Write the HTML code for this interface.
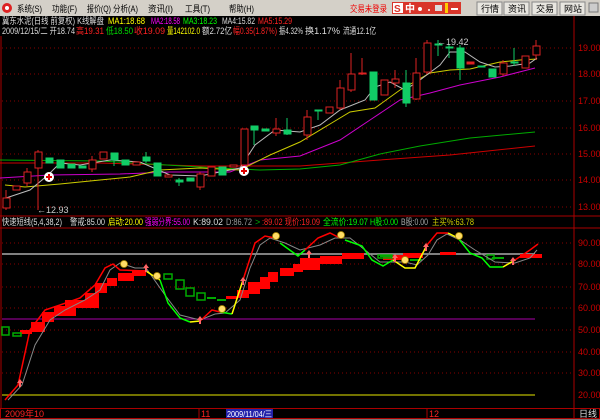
<!DOCTYPE html>
<html><head><meta charset="utf-8"><style>
html,body{margin:0;padding:0;background:#000;width:600px;height:420px;overflow:hidden;font-family:"Liberation Sans","Noto Sans CJK SC",sans-serif;}
svg{display:block}
</style></head><body>
<svg width="600" height="420" xmlns="http://www.w3.org/2000/svg" font-family="Liberation Sans, Noto Sans CJK SC, sans-serif">
<rect width="600" height="420" fill="#000"/>
<rect x="0" y="0" width="600" height="16" fill="#d4d0c8"/>
<circle cx="7" cy="8" r="5" fill="#d22"/><circle cx="7" cy="8" r="2" fill="#fff"/>
<g font-size="9" fill="#000" lengthAdjust="spacingAndGlyphs">
<text x="17" y="12" textLength="25" lengthAdjust="spacingAndGlyphs">系统(S)</text><text x="52" y="12" textLength="25" lengthAdjust="spacingAndGlyphs">功能(F)</text><text x="87" y="12" textLength="24" lengthAdjust="spacingAndGlyphs">报价(Q)</text><text x="113" y="12" textLength="25" lengthAdjust="spacingAndGlyphs">分析(A)</text><text x="148" y="12" textLength="25" lengthAdjust="spacingAndGlyphs">资讯(I)</text><text x="185" y="12" textLength="25" lengthAdjust="spacingAndGlyphs">工具(T)</text><text x="229" y="12" textLength="25" lengthAdjust="spacingAndGlyphs">帮助(H)</text>
</g>
<text x="350" y="12" font-size="9" fill="#e00" textLength="37" lengthAdjust="spacingAndGlyphs">交易未登录</text>
<rect x="392" y="2" width="69" height="12" fill="#d9352a"/>
<rect x="393" y="3" width="10" height="10" fill="#fff"/><text x="394" y="12" font-size="10" font-weight="bold" fill="#d9352a">S</text>
<text x="405" y="12" font-size="10" fill="#fff" font-weight="bold">中</text>
<circle cx="420" cy="9" r="2" fill="#fff"/><circle cx="429" cy="10" r="1" fill="#fff"/>
<rect x="435" y="5" width="7" height="6" fill="#ddd"/><rect x="445" y="3" width="3" height="10" fill="#fc0"/><rect x="451" y="8" width="7" height="2" fill="#fff"/>
<g font-size="9" fill="#000">
<rect x="477" y="2" width="25" height="13" fill="#e8e6e0" stroke="#888"/><text x="481" y="12">行情</text>
<rect x="504" y="2" width="25" height="13" fill="#e8e6e0" stroke="#888"/><text x="508" y="12">资讯</text>
<rect x="532" y="2" width="25" height="13" fill="#e8e6e0" stroke="#888"/><text x="536" y="12">交易</text>
<rect x="560" y="2" width="25" height="13" fill="#e8e6e0" stroke="#888"/><text x="564" y="12">网站</text>
</g>
<rect x="589" y="3" width="9" height="9" fill="#ccc" stroke="#777"/>
<g font-size="9">
<text x="2" y="24" fill="#ddd" textLength="102" lengthAdjust="spacingAndGlyphs">冀东水泥(日线 前复权) K线解盘</text>
<text x="108" y="24" fill="#ff0" textLength="37" lengthAdjust="spacingAndGlyphs">MA1:18.68</text>
<text x="151" y="24" fill="#f0f" textLength="29" lengthAdjust="spacingAndGlyphs">MA2:18.58</text>
<text x="183" y="24" fill="#0f0" textLength="34" lengthAdjust="spacingAndGlyphs">MA3:18.23</text>
<text x="222" y="24" fill="#ddd" textLength="33" lengthAdjust="spacingAndGlyphs">MA4:15.82</text>
<text x="258" y="24" fill="#f22" textLength="34" lengthAdjust="spacingAndGlyphs">MA5:15.29</text>
<text x="2" y="34" fill="#ddd" textLength="73" lengthAdjust="spacingAndGlyphs">2009/12/15/二 开18.74</text>
<text x="76" y="34" fill="#f22" textLength="28" lengthAdjust="spacingAndGlyphs">高19.31</text>
<text x="106" y="34" fill="#0d0" textLength="27" lengthAdjust="spacingAndGlyphs">低18.50</text>
<text x="134" y="34" fill="#f22" textLength="31" lengthAdjust="spacingAndGlyphs">收19.09</text>
<text x="167" y="34" fill="#ff0" textLength="33" lengthAdjust="spacingAndGlyphs">量142102.0</text>
<text x="202" y="34" fill="#ddd" textLength="30" lengthAdjust="spacingAndGlyphs">额2.72亿</text>
<text x="233" y="34" fill="#f22" textLength="44" lengthAdjust="spacingAndGlyphs">幅0.35(1.87%)</text>
<text x="279" y="34" fill="#ddd" textLength="24" lengthAdjust="spacingAndGlyphs">振4.32%</text>
<text x="305" y="34" fill="#ddd" textLength="35" lengthAdjust="spacingAndGlyphs">换1.17%</text>
<text x="343" y="34" fill="#ddd" textLength="33" lengthAdjust="spacingAndGlyphs">流通12.1亿</text>
</g>
<line x1="574" y1="16" x2="574" y2="408" stroke="#a00"/>
<line x1="1" y1="36" x2="1" y2="408" stroke="#a00"/>
<line x1="0" y1="216" x2="600" y2="216" stroke="#a00"/>
<line x1="0" y1="228" x2="600" y2="228" stroke="#a00"/>
<g stroke="#800" stroke-dasharray="1,3">
<line x1="2" y1="48" x2="574" y2="48"/><line x1="2" y1="74" x2="574" y2="74"/><line x1="2" y1="101" x2="574" y2="101"/><line x1="2" y1="128" x2="574" y2="128"/><line x1="2" y1="154" x2="574" y2="154"/><line x1="2" y1="180" x2="574" y2="180"/><line x1="2" y1="207" x2="574" y2="207"/>
<line x1="2" y1="243" x2="574" y2="243"/><line x1="2" y1="264" x2="574" y2="264"/><line x1="2" y1="287" x2="574" y2="287"/><line x1="2" y1="308" x2="574" y2="308"/><line x1="2" y1="330" x2="574" y2="330"/><line x1="2" y1="352" x2="574" y2="352"/><line x1="2" y1="373" x2="574" y2="373"/>
</g>
<g font-size="9" fill="#c00">
<text x="578" y="51">19.00</text><text x="578" y="77">18.00</text><text x="578" y="104">17.00</text><text x="578" y="131">16.00</text><text x="578" y="157">15.00</text><text x="578" y="183">14.00</text><text x="578" y="210">13.00</text>
<text x="578" y="246">90.00</text><text x="578" y="267">80.00</text><text x="578" y="290">70.00</text><text x="578" y="311">60.00</text><text x="578" y="333">50.00</text><text x="578" y="355">40.00</text><text x="578" y="376">30.00</text><text x="578" y="398">20.00</text>
</g>
<g fill="none" stroke-width="1">
<polyline stroke="#c00" points="0,163 100,163 200,166 300,166 380,160 450,155 535,146"/>
<polyline stroke="#0a0" points="0,160 100,161 200,167 260,170 300,169 340,165 380,154 420,146 470,138 535,132"/>
<polyline stroke="#c0c" points="0,178 50,175 120,174 170,172 230,172 260,160 300,156 340,140 370,120 400,100 430,93 460,85 500,77 535,68"/>
<polyline stroke="#cc0" points="5,185 25,187 60,184 100,180 130,177 160,170 200,168 240,170 270,155 300,142 330,124 350,112 375,108 400,90 430,73 450,70 470,69 500,62 520,60 537,59"/>
<polyline stroke="#bbb" points="6,198 30,190 48,175 60,163 80,165 110,160 140,162 170,175 200,176 220,172 240,168 255,145 275,130 300,132 320,125 340,110 365,100 375,87 390,82 405,90 420,80 440,65 450,52 465,52 480,62 495,67 510,66 530,63 537,58"/>
</g>
<g stroke="#d22" fill="none">
<line x1="6" y1="190" x2="6" y2="210"/><rect x="3" y="198" width="7" height="10" fill="#000"/>
<rect x="13" y="186" width="7" height="4" fill="#000"/>
<line x1="27" y1="168" x2="27" y2="186"/><rect x="24" y="172" width="7" height="11" fill="#000"/>
<line x1="38" y1="150" x2="38" y2="210"/><rect x="35" y="152" width="7" height="16" fill="#000"/>
<line x1="92" y1="156" x2="92" y2="172"/><rect x="89" y="160" width="7" height="9" fill="#000"/>
<rect x="100" y="152" width="7" height="7" fill="#000"/>
<rect x="133" y="162" width="7" height="3" fill="#000"/>
<rect x="165" y="175" width="7" height="2" fill="#000"/>
<line x1="200" y1="172" x2="200" y2="190"/><rect x="197" y="174" width="7" height="13" fill="#000"/>
<rect x="208" y="167" width="7" height="9" fill="#000"/>
<rect x="230" y="165" width="7" height="2" fill="#000"/>
<rect x="241" y="129" width="7" height="36" fill="#000"/>
<line x1="276" y1="118" x2="276" y2="136"/><rect x="273" y="129" width="7" height="4" fill="#000"/>
<line x1="307" y1="110" x2="307" y2="140"/><rect x="304" y="117" width="7" height="18" fill="#000"/>
<rect x="326" y="107" width="7" height="6" fill="#000"/>
<line x1="340" y1="80" x2="340" y2="110"/><rect x="337" y="88" width="7" height="20" fill="#000"/>
<line x1="351" y1="53" x2="351" y2="92"/><rect x="348" y="74" width="7" height="16" fill="#000"/>
<line x1="362" y1="58" x2="362" y2="75"/><rect x="359" y="73" width="7" height="1" fill="#000"/>
<rect x="381" y="80" width="7" height="15" fill="#000"/>
<line x1="395" y1="70" x2="395" y2="88"/><rect x="392" y="79" width="7" height="4" fill="#000"/>
<line x1="416" y1="58" x2="416" y2="100"/><rect x="413" y="73" width="7" height="26" fill="#000"/>
<line x1="427" y1="40" x2="427" y2="74"/><rect x="424" y="43" width="7" height="29" fill="#000"/>
<rect x="467" y="62" width="7" height="2" fill="#d22"/>
<line x1="503" y1="60" x2="503" y2="76"/><rect x="500" y="63" width="7" height="11" fill="#000"/>
<rect x="522" y="56" width="7" height="12" fill="#000"/>
<line x1="536" y1="40" x2="536" y2="60"/><rect x="533" y="46" width="7" height="9" fill="#000"/>
</g>
<g fill="#1c6" stroke="#1c6">
<rect x="46" y="158" width="7" height="5"/><rect x="57" y="160" width="7" height="8"/><rect x="68" y="164" width="7" height="4"/><rect x="79" y="166" width="7" height="2"/>
<rect x="111" y="153" width="7" height="7"/><line x1="114" y1="153" x2="114" y2="166"/><rect x="122" y="160" width="7" height="5"/><line x1="146" y1="152" x2="146" y2="163"/><rect x="143" y="157" width="7" height="4"/>
<rect x="154" y="163" width="7" height="13"/><rect x="176" y="180" width="7" height="2"/><line x1="179" y1="178" x2="179" y2="186"/><rect x="187" y="178" width="7" height="3"/>
<rect x="219" y="167" width="7" height="8"/><rect x="251" y="126" width="7" height="4"/><line x1="254" y1="126" x2="254" y2="145"/><rect x="262" y="129" width="7" height="2"/><line x1="287" y1="118" x2="287" y2="135"/><rect x="284" y="130" width="7" height="4"/>
<rect x="315" y="110" width="7" height="1"/><line x1="318" y1="110" x2="318" y2="120"/>
<rect x="370" y="72" width="7" height="28"/><rect x="403" y="83" width="7" height="20"/><line x1="406" y1="70" x2="406" y2="107"/>
<rect x="435" y="44" width="7" height="1"/><line x1="438" y1="40" x2="438" y2="56"/><rect x="446" y="47" width="7" height="1"/><line x1="449" y1="44" x2="449" y2="58"/>
<rect x="457" y="48" width="7" height="20"/><line x1="460" y1="45" x2="460" y2="80"/><rect x="478" y="66" width="7" height="1"/><rect x="489" y="69" width="7" height="8"/><rect x="511" y="62" width="7" height="1"/><line x1="514" y1="48" x2="514" y2="66"/>
</g>
<circle cx="49" cy="177" r="5" fill="#fff"/><path d="M49 174v6M46 177h6" stroke="#d00" stroke-width="2"/>
<circle cx="244" cy="171" r="5" fill="#fff"/><path d="M244 168v6M241 171h6" stroke="#d00" stroke-width="2"/>
<text x="37" y="213" font-size="9" fill="#ccc">←12.93</text>
<text x="437" y="45" font-size="9" fill="#ccc">←19.42</text>
<g font-size="9">
<text x="2" y="225" fill="#ddd" textLength="60" lengthAdjust="spacingAndGlyphs">快速短线(5,4,38,2)</text>
<text x="70" y="225" fill="#ddd" textLength="35" lengthAdjust="spacingAndGlyphs">警戒:85.00</text>
<text x="108" y="225" fill="#ff0" textLength="35" lengthAdjust="spacingAndGlyphs">启动:20.00</text>
<text x="145" y="225" fill="#f0f" textLength="45" lengthAdjust="spacingAndGlyphs">强弱分界:55.00</text>
<text x="193" y="225" fill="#ddd" textLength="30" lengthAdjust="spacingAndGlyphs">K:89.02</text>
<text x="226" y="225" fill="#999" textLength="26" lengthAdjust="spacingAndGlyphs">D:86.72</text>
<text x="255" y="225" fill="#0a0">&gt;</text>
<text x="262" y="225" fill="#f22" textLength="58" lengthAdjust="spacingAndGlyphs">:89.02 现价:19.09</text>
<text x="323" y="225" fill="#0f0" textLength="45" lengthAdjust="spacingAndGlyphs">全流价:19.07</text>
<text x="370" y="225" fill="#0f0" textLength="28" lengthAdjust="spacingAndGlyphs">H股:0.00</text>
<text x="401" y="225" fill="#aaa" textLength="27" lengthAdjust="spacingAndGlyphs">B股:0.00</text>
<text x="432" y="225" fill="#cc0" textLength="42" lengthAdjust="spacingAndGlyphs">主买%:63.78</text>
</g>
<line x1="2" y1="254" x2="535" y2="254" stroke="#aaa" stroke-width="1.5"/>
<line x1="2" y1="319" x2="535" y2="319" stroke="#a0a"/>
<line x1="2" y1="395" x2="535" y2="395" stroke="#990" stroke-width="1.5"/>
<g fill="#f00">
<rect x="20" y="330" width="12" height="4"/><rect x="31" y="322" width="14" height="10"/><rect x="42" y="312" width="12" height="10"/><rect x="54" y="306" width="22" height="10"/><rect x="65" y="300" width="34" height="8"/><rect x="85" y="293" width="14" height="7"/><rect x="95" y="283" width="12" height="10"/><rect x="107" y="278" width="10" height="8"/><rect x="118" y="273" width="16" height="8"/><rect x="132" y="270" width="14" height="6"/>
<rect x="226" y="296" width="12" height="3"/><rect x="237" y="290" width="12" height="8"/><rect x="248" y="282" width="12" height="12"/><rect x="260" y="277" width="10" height="12"/><rect x="268" y="272" width="10" height="10"/><rect x="280" y="268" width="14" height="8"/><rect x="293" y="264" width="10" height="8"/><rect x="300" y="258" width="20" height="12"/><rect x="320" y="256" width="22" height="8"/><rect x="342" y="253" width="22" height="6"/><rect x="383" y="255" width="20" height="5"/><rect x="403" y="253" width="20" height="5"/><rect x="440" y="252" width="16" height="3"/><rect x="520" y="254" width="22" height="4"/>
</g>
<g fill="none" stroke="#0a0" stroke-width="1.5">
<rect x="2" y="327" width="7" height="8"/><rect x="13" y="333" width="8" height="3"/>
<rect x="164" y="274" width="8" height="5"/><rect x="176" y="280" width="8" height="9"/><rect x="186" y="288" width="8" height="8"/><rect x="197" y="293" width="8" height="7"/>
<rect x="378" y="255" width="14" height="3"/><rect x="487" y="255" width="7" height="4"/>
</g>
<g fill="#0a0"><rect x="207" y="297" width="9" height="2"/><rect x="217" y="299" width="9" height="2"/><rect x="380" y="255" width="12" height="2"/><rect x="410" y="259" width="12" height="2"/><rect x="492" y="257" width="12" height="2"/></g>
<polyline fill="none" stroke="#888" points="8,400 22,385 35,345 50,320 65,310 85,300 100,290 110,270 120,263 135,268 146,268 165,295 180,315 200,320 215,314 225,313 240,300 250,268 260,245 270,238 285,243 300,250 320,245 335,238 350,238 365,250 380,262 392,262 405,262 417,265 428,255 437,240 447,234 460,240 475,250 495,262 515,263 530,258 537,250"/>
<polyline fill="none" stroke="#f00" stroke-width="1.5" points="5,400 18,385 30,330 45,310 60,305 80,298 95,285 105,268 113,264 120,270 146,271"/>
<polyline fill="none" stroke="#0f0" stroke-width="1.5" points="160,280 168,303 180,318 190,322"/>
<polyline fill="none" stroke="#ff0" stroke-width="1.5" points="146,271 152,275 160,280"/>
<polyline fill="none" stroke="#f00" stroke-width="1.5" points="200,321 212,310 220,312"/>
<polyline fill="none" stroke="#ff0" stroke-width="1.5" points="190,322 200,321"/>
<polyline fill="none" stroke="#0f0" stroke-width="1.5" points="220,312 232,314"/>
<polyline fill="none" stroke="#ff0" stroke-width="1.5" points="232,314 243,280"/>
<polyline fill="none" stroke="#f00" stroke-width="1.5" points="243,280 255,243 265,236 275,238"/>
<polyline fill="none" stroke="#0f0" stroke-width="1.5" points="280,243 298,256 305,250"/>
<polyline fill="none" stroke="#f00" stroke-width="1.5" points="305,250 318,238 330,233 340,238"/>
<polyline fill="none" stroke="#0f0" stroke-width="1.5" points="345,240 362,246 372,260 383,266 393,260"/>
<polyline fill="none" stroke="#ff0" stroke-width="1.5" points="393,260 405,268 415,268 427,245"/>
<polyline fill="none" stroke="#f00" stroke-width="1.5" points="427,245 437,233 448,233"/>
<polyline fill="none" stroke="#ff0" stroke-width="1.5" points="448,233 458,238"/>
<polyline fill="none" stroke="#0f0" stroke-width="1.5" points="458,238 470,253 482,258 490,267 503,267"/>
<polyline fill="none" stroke="#ff0" stroke-width="1.5" points="503,267 515,260"/>
<polyline fill="none" stroke="#f00" stroke-width="1.5" points="515,260 530,250 538,244"/>
<g fill="#fd6" stroke="#a80" stroke-width="0.8">
<circle cx="124" cy="264" r="3.5"/><circle cx="157" cy="276" r="3.5"/><circle cx="222" cy="309" r="3.5"/><circle cx="276" cy="236" r="3.5"/><circle cx="341" cy="235" r="3.5"/><circle cx="405" cy="260" r="3.5"/><circle cx="459" cy="236" r="3.5"/>
</g>
<g fill="#f66">
<path d="M17 383l3 -4l3 4h-2v4h-2v-4z"/><path d="M143 268l3 -4l3 4h-2v4h-2v-4z"/><path d="M197 320l3 -4l3 4h-2v4h-2v-4z"/><path d="M240 281l3 -4l3 4h-2v4h-2v-4z"/><path d="M306 254l3 -4l3 4h-2v4h-2v-4z"/><path d="M392 258l3 -4l3 4h-2v4h-2v-4z"/><path d="M423 247l3 -4l3 4h-2v4h-2v-4z"/><path d="M510 261l3 -4l3 4h-2v4h-2v-4z"/>
</g>
<rect x="0.5" y="408.5" width="599" height="10" fill="#000" stroke="#a00"/>
<line x1="199" y1="408" x2="199" y2="419" stroke="#a00"/><line x1="427" y1="408" x2="427" y2="419" stroke="#a00"/><line x1="574" y1="408" x2="574" y2="419" stroke="#a00"/>
<text x="5" y="417" font-size="9" fill="#f22">2009年10</text>
<text x="201" y="417" font-size="9" fill="#f22">11</text>
<rect x="226" y="409" width="47" height="9" fill="#22a"/>
<text x="227" y="417" font-size="8.5" fill="#fff" textLength="45" lengthAdjust="spacingAndGlyphs">2009/11/04/三</text>
<text x="429" y="417" font-size="9" fill="#f22">12</text>
<text x="579" y="417" font-size="9" fill="#ddd">日线</text>
<rect x="0" y="419" width="600" height="1" fill="#777"/>
</svg>
</body></html>
